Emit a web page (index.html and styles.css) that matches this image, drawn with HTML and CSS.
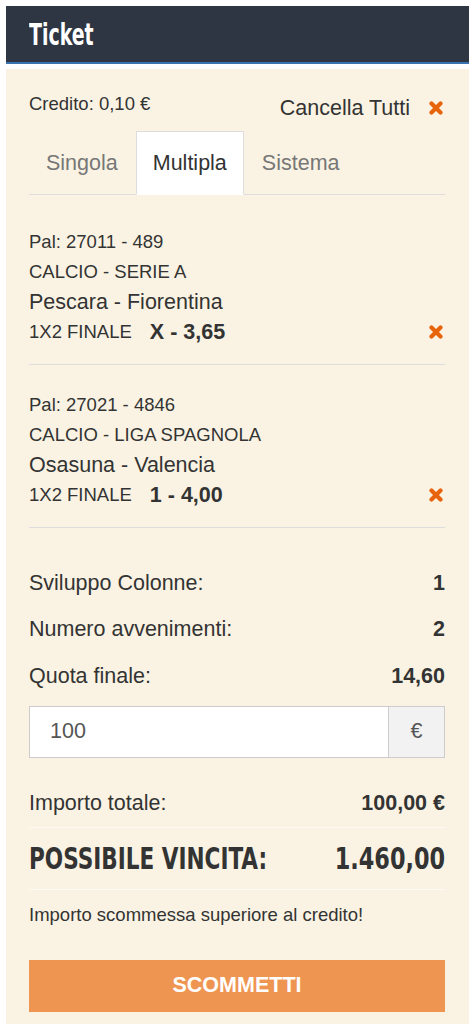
FILE: index.html
```html
<!DOCTYPE html>
<html lang="it">
<head>
<meta charset="utf-8">
<title>Ticket</title>
<link rel="stylesheet" href="styles.css">
</head>
<body>
<div class="wrap">
  <header class="head"><span class="head-title">Ticket</span></header>
  <main class="panel">
    <div class="top-row">
      <span class="credito">Credito: 0,10 €</span>
      <span class="cancella">Cancella Tutti
        <svg class="x-icon" viewBox="0 0 14 14" width="14" height="14"><path d="M2.5 2.5 L11.5 11.5 M11.5 2.5 L2.5 11.5"/></svg>
      </span>
    </div>
    <nav class="tabs">
      <span class="tab">Singola</span>
      <span class="tab active">Multipla</span>
      <span class="tab">Sistema</span>
    </nav>
    <section class="tab-content">
      <div class="item">
        <div class="line small">Pal: 27011 - 489</div>
        <div class="line small">CALCIO - SERIE A</div>
        <div class="line big">Pescara - Fiorentina</div>
        <div class="line bet">
          <span class="small">1X2 FINALE</span><b class="odd">X - 3,65</b>
          <svg class="x-icon right" viewBox="0 0 14 14" width="14" height="14"><path d="M2.5 2.5 L11.5 11.5 M11.5 2.5 L2.5 11.5"/></svg>
        </div>
      </div>
      <div class="item">
        <div class="line small">Pal: 27021 - 4846</div>
        <div class="line small">CALCIO - LIGA SPAGNOLA</div>
        <div class="line big">Osasuna - Valencia</div>
        <div class="line bet">
          <span class="small">1X2 FINALE</span><b class="odd">1 - 4,00</b>
          <svg class="x-icon right" viewBox="0 0 14 14" width="14" height="14"><path d="M2.5 2.5 L11.5 11.5 M11.5 2.5 L2.5 11.5"/></svg>
        </div>
      </div>
      <div class="summary">
        <div class="row"><span>Sviluppo Colonne:</span><b>1</b></div>
        <div class="row"><span>Numero avvenimenti:</span><b>2</b></div>
        <div class="row"><span>Quota finale:</span><b>14,60</b></div>
        <div class="input-group">
          <div class="input">100</div>
          <div class="addon">€</div>
        </div>
        <div class="row total"><span>Importo totale:</span><b>100,00 €</b></div>
        <div class="win">
          <span class="win-label">POSSIBILE VINCITA:</span>
          <span class="win-value">1.460,00</span>
        </div>
        <p class="msg">Importo scommessa superiore al credito!</p>
        <button class="btn">SCOMMETTI</button>
      </div>
    </section>
  </main>
</div>
</body>
</html>
```
FILE: styles.css
```css
* { box-sizing: border-box; }
html, body { margin: 0; padding: 0; background: #fff; }
body {
  font-family: "Liberation Sans", Arial, sans-serif;
  color: #333;
}
.wrap { padding: 6px 7px 0 6px; }
.head {
  height: 58px;
  background: #2d3642;
  border-bottom: 2px solid #3a74b0;
  padding-left: 23px;
  display: flex;
  align-items: center;
  margin-bottom: 5px;
  overflow: hidden;
}
.head-title {
  display: inline-block;
  font-family: "DejaVu Sans Condensed", "DejaVu Sans", sans-serif;
  font-weight: bold;
  font-size: 31px;
  color: #fff;
  transform: scaleX(0.68);
  transform-origin: left center;
  line-height: 1;
  margin-top: 1px;
}
.panel {
  background: #faf3e3;
  padding: 24px 24px 12px 23px;
  min-height: 955px;
}
.top-row {
  display: flex;
  justify-content: space-between;
  align-items: flex-start;
}
.credito { font-size: 18.5px; line-height: 22px; }
.cancella {
  font-size: 21.5px;
  line-height: 30px;
  display: flex;
  align-items: center;
  gap: 19px;
  padding-right: 2px;
}
.x-icon {
  fill: none;
  stroke: #e8630e;
  stroke-width: 4.2;
  stroke-linecap: round;
  display: block;
}
.tabs {
  display: flex;
  border-bottom: 1px solid #ddd;
  margin-top: 8px;
  height: 64px;
}
.tab {
  font-size: 21.5px;
  line-height: 62px;
  height: 64px;
  padding: 0 16px;
  border: 1px solid transparent;
  margin-right: 1px;
  color: #777;
}
.tab.active {
  background: #fff;
  border-color: #ddd #ddd #fff;
  color: #333;
}
.tab-content { padding-top: 7px; }
.item {
  padding: 25px 0 17px;
  border-bottom: 1px solid #ddd;
}
.line { line-height: 30px; height: 30px; }
.small { font-size: 18.5px; }
.big { font-size: 21.5px; }
.bet { display: flex; align-items: center; }
.odd { font-size: 21.5px; margin-left: 18px; }
.x-icon.right { margin-left: auto; margin-right: 2px; }
.summary { padding-top: 32px; }
.row {
  display: flex;
  justify-content: space-between;
  align-items: center;
  height: 46.5px;
  font-size: 21.5px;
}
.input-group {
  display: flex;
  height: 52px;
  margin-top: 6px;
  margin-bottom: 23px;
}
.input {
  flex: 1;
  background: #fff;
  border: 1px solid #ccc;
  font-size: 21.5px;
  color: #555;
  padding-left: 20px;
  display: flex;
  align-items: center;
}
.addon {
  width: 56px;
  background: #f2f2f2;
  border: 1px solid #ccc;
  border-left: none;
  font-size: 21.5px;
  color: #555;
  display: flex;
  align-items: center;
  justify-content: center;
}
.row.total { border-bottom: 1px solid #fdfaf4; height: 47px; }
.win {
  height: 62px;
  display: flex;
  justify-content: space-between;
  align-items: center;
  border-bottom: 1px solid #fdfaf4;
  font-family: "DejaVu Sans Condensed", "DejaVu Sans", sans-serif;
  font-size: 30px;
  font-weight: bold;
  color: #333;
}
.win-label {
  display: block;
  flex: 0 0 240px;
  min-width: 0;
  transform: scaleX(0.80);
  transform-origin: left center;
  white-space: nowrap;
}
.win-value {
  display: block;
  flex: 0 0 auto;
  margin-left: auto;
  transform: scaleX(0.83);
  transform-origin: right center;
  white-space: nowrap;
}
.msg {
  margin: 14px 0 0;
  font-size: 18.5px;
  line-height: 22px;
}
.btn {
  display: block;
  width: 100%;
  height: 52px;
  margin-top: 34px;
  border: none;
  background: #ef9552;
  color: #fff;
  font-family: "Liberation Sans", Arial, sans-serif;
  font-weight: bold;
  font-size: 21.5px;
}
```
